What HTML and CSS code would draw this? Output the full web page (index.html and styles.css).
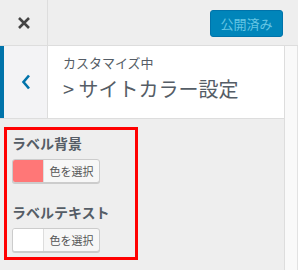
FILE: index.html
```html
<!DOCTYPE html>
<html lang="ja">
<head>
    <meta charset="UTF-8">
    <title>カスタマイズ</title>
    <link rel="stylesheet" href="styles.css">
</head>
<body>

<div class="customizer">
    <header class="topbar">
        <button class="close-btn" aria-label="閉じる">
            <svg width="14" height="14" viewBox="0 0 14 14"><path d="M2 2 L12 12 M12 2 L2 12" stroke="#444" stroke-width="2.6" stroke-linecap="butt"/></svg>
        </button>
        <button class="publish-btn" disabled>公開済み</button>
    </header>

    <div class="main">
        <div class="panel">
            <div class="section-head">
                <button class="back-btn" aria-label="戻る">
                    <svg width="10" height="16" viewBox="0 0 10 16"><path d="M8 1.5 L2.5 8 L8 14.5" fill="none" stroke="#0073aa" stroke-width="2.6"/></svg>
                </button>
                <div class="section-title">
                    <span class="crumb">カスタマイズ中</span>
                    <h2>&gt; サイトカラー設定</h2>
                </div>
            </div>

            <div class="controls">
                <div class="control">
                    <label>ラベル背景</label>
                    <button class="color-btn">
                        <span class="swatch" style="background: #ff7777;"></span>
                        <span class="color-text">色を選択</span>
                    </button>
                </div>
                <div class="control">
                    <label>ラベルテキスト</label>
                    <button class="color-btn">
                        <span class="swatch" style="background: #ffffff;"></span>
                        <span class="color-text">色を選択</span>
                    </button>
                </div>
            </div>
        </div>
        <div class="preview"></div>
    </div>
</div>

</body>
</html>
```

FILE: styles.css
```css
body {
    margin: 0;
    font-family: "Noto Sans CJK JP", "Noto Sans", sans-serif;
    background: #fff;
    color: #555d66;
}

button {
    font-family: inherit;
}

.customizer {
    width: 298px;
    height: 270px;
    display: flex;
    flex-direction: column;
    background: #f9f9f9;
}

.topbar {
    display: flex;
    justify-content: space-between;
    align-items: center;
    height: 45px;
    background: #eee;
    border-bottom: 1px solid #ddd;
    flex-shrink: 0;
}

.close-btn {
    width: 48px;
    height: 45px;
    display: flex;
    align-items: center;
    justify-content: center;
    background: #eee;
    border: none;
    border-right: 1px solid #ddd;
    padding: 0;
}

.publish-btn {
    width: 73px;
    height: 27px;
    margin-right: 15px;
    margin-top: 1px;
    background: #0085ba;
    border: 1px solid #0073aa;
    border-radius: 3px;
    color: #66c6e4;
    font-size: 13px;
    padding: 0;
}

.main {
    display: flex;
    flex: 1;
}

.panel {
    width: 284px;
    background: #eee;
    border-right: 1px solid #ddd;
}

.preview {
    flex: 1;
    border-right: 1px solid #e2e2e2;
}

.section-head {
    display: flex;
    height: 72px;
    background: #fff;
    border-bottom: 1px solid #ddd;
}

.back-btn {
    width: 48px;
    display: flex;
    align-items: center;
    justify-content: center;
    padding: 0;
    background: #f3f3f5;
    border: none;
    border-left: 4px solid #0073aa;
    border-right: 1px solid #ddd;
}

.section-title {
    padding: 8px 0 0 15px;
}

.crumb {
    display: block;
    font-size: 13px;
    line-height: 18px;
}

.section-title h2 {
    margin: 3px 0 0;
    font-size: 20px;
    font-weight: 400;
    line-height: 28px;
}

.controls {
    width: 123px;
    margin: 8px 0 0 4px;
    padding: 3px 0 5px 5px;
    border: 3px solid #ff0000;
}

.control label {
    display: block;
    font-size: 14px;
    font-weight: 700;
    line-height: 20px;
    margin-bottom: 6px;
}

.control + .control {
    margin-top: 19px;
}

.color-btn {
    display: flex;
    width: 88px;
    height: 24px;
    padding: 0;
    border: 1px solid #ccc;
    border-radius: 3px;
    box-shadow: 0 1px 0 #ccc;
    background: #f7f7f7;
    overflow: hidden;
}

.swatch {
    width: 30px;
    height: 100%;
    border-right: 1px solid #ddd;
}

.color-text {
    flex: 1;
    text-align: center;
    font-size: 11px;
    line-height: 22px;
    color: #555;
}
```
